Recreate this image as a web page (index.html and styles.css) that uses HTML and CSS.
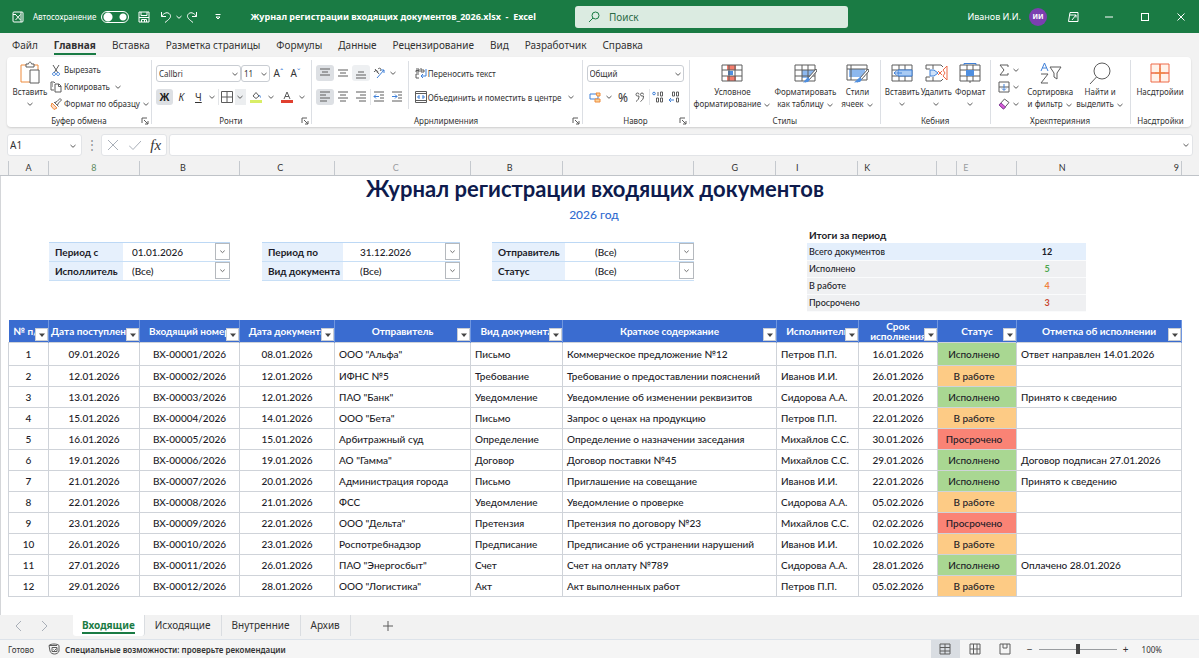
FILE: index.html
```html
<!DOCTYPE html>
<html lang="ru">
<head>
  <meta charset="UTF-8" />
  <meta name="viewport" content="width=device-width, initial-scale=1.0" />
  <title>Журнал регистрации входящих документов_2026.xlsx - Excel</title>
  <link rel="stylesheet" href="styles.css">
</head>
<body>
  <svg class="sprite" aria-hidden="true">
    <symbol id="chev" viewBox="0 0 8 8"><path d="M1.5 3 4 5.3 6.5 3" /></symbol>
    <symbol id="tri" viewBox="0 0 8 8"><path d="M1 2.5h6L4 6z" fill="#444" stroke="none" /></symbol>
    <symbol id="launch" viewBox="0 0 8 8"><path d="M1 6V1h5M3 3l4 4M7 4v3H4" /></symbol>
    <symbol id="sheetgrid" viewBox="0 0 24 20"><path d="M2 2h20v16H2zM2 7h20M2 13h20M9 2v16M15 2v16" /></symbol>
  </svg>

  <header class="titlebar">
    <svg class="ico app" viewBox="0 0 12 12"><rect x="1" y="1" width="10" height="10" rx="1" /><path d="M1 3.5h3M3.5 3.5l5 5.5M8.5 3.5l-5 5.5M9 1v10" /></svg>
    <label class="autosave">Автосохранение <input type="checkbox" class="toggle"></label>
    <button class="icon-btn"><svg class="ico" viewBox="0 0 12 12"><path d="M1 1h10v10H1zM3 1v3.5h6V1M1 6.5h10M3.5 11V8.500h5V11M6.500 9v2" /></svg></button>
    <div class="history">
      <button><svg class="ico" viewBox="0 0 12 12"><path d="M1.500 1v4.500H6M1.500 5.500C4 1.500 8 .5 10 3.500S8 9 5 11.500" /></svg></button>
      <button><svg class="chev"><use href="#chev" /></svg></button>
      <button><svg class="ico" viewBox="0 0 12 12"><path d="M10.500 1v4.500H6M10.500 5.500C8 1.500 4 .5 2 3.500S4 9 7 11.500" /></svg></button>
    </div>
    <button class="customize"><svg class="chev" viewBox="0 0 8 8"><path d="M1.500 1.500h5M2 4h4L4 6z" /></svg></button>
    <span class="doc-name">Журнал регистрации входящих документов_2026.xlsx&nbsp; - &nbsp;Excel</span>
    <label class="search">
      <svg class="ico" viewBox="0 0 12 12"><circle cx="7.500" cy="4.500" r="3.500" /><path d="M5 7 1 11" /></svg>
      <input type="text" placeholder="Поиск" aria-label="Поиск">
    </label>
    <div class="account">
      <span>Иванов И.И.</span>
      <span class="avatar">ИИ</span>
    </div>
    <div class="window-btns">
      <button><svg class="ico" viewBox="0 0 12 12"><path d="M3 1.500h8v9H1.500L3 1.500M2.500 4h4M5 9l4-5M6.500 4H9v2.500" /></svg></button>
      <button><svg class="ico" viewBox="0 0 12 12"><path d="M2 6h8" /></svg></button>
      <button><svg class="ico" viewBox="0 0 12 12"><rect x="2.500" y="2.500" width="7" height="7" /></svg></button>
      <button><svg class="ico" viewBox="0 0 12 12"><path d="M2.500 2.500l7 7M9.500 2.500l-7 7" /></svg></button>
    </div>
  </header>

  <nav class="tabs">
    <a href="#">Файл</a>
    <a href="#" class="active">Главная</a>
    <a href="#">Вставка</a>
    <a href="#">Разметка страницы</a>
    <a href="#">Формулы</a>
    <a href="#">Данные</a>
    <a href="#">Рецензирование</a>
    <a href="#">Вид</a>
    <a href="#">Разработчик</a>
    <a href="#">Справка</a>
  </nav>

  <section class="ribbon">
    <div class="group clipboard">
      <div class="group-body">
        <button class="big paste">
          <svg viewBox="0 0 24 24"><path class="orange" d="M8 4H3v17h10M16 4h4v5" /><path d="M8 6V3h2.500c0-2.500 3-2.500 3 0H16v3zM12 9h9v13h-9z" fill="#fff" /></svg>
          <span>Вставить</span><svg class="chev"><use href="#chev" /></svg>
        </button>
        <div class="stack">
          <button><svg class="ico" viewBox="0 0 12 12"><path d="M3 1l5 8M9 1 4 9" /><path class="blue" d="M4 8.500a1.500 1.500 0 1 0 .1 0M8 8.500a1.500 1.500 0 1 0 .1 0" /></svg>Вырезать</button>
          <button><svg class="ico" viewBox="0 0 12 12"><path d="M4 9H1V1h3l1 1M5 3h4l2 2v6H5zM8.500 3v2.500H11M2 3h1M2 5h1" /></svg>Копировать <svg class="chev gap"><use href="#chev" /></svg></button>
          <button><svg class="ico" viewBox="0 0 12 12"><path class="orange" d="M2 5l5 5-3 1.500L1 8z" fill="#fbd9c4" /><path d="M4 4l4.500 4.500M5 4.500l2-1 3-3 1.500 1.500-3 3-1 2" /></svg>Формат по образцу<svg class="chev"><use href="#chev" /></svg></button>
        </div>
      </div>
      <div class="group-name">Буфер обмена<button class="launcher"><svg class="chev"><use href="#launch" /></svg></button></div>
    </div>

    <div class="group font">
      <div class="group-body rows">
        <div class="row">
          <div class="pick family"><select aria-label="Шрифт"><option>Callbri</option></select><svg class="chev"><use href="#chev" /></svg></div>
          <div class="pick size"><select aria-label="Размер"><option>11</option></select><svg class="chev"><use href="#chev" /></svg></div>
          <button class="tool grow">A<sup>ˆ</sup></button>
          <button class="tool grow">A<sup>ˇ</sup></button>
        </div>
        <div class="row">
          <button class="tool on"><b>Ж</b></button>
          <button class="tool"><i>К</i></button>
          <button class="tool"><u>Ч</u></button>
          <button class="more"><svg class="chev"><use href="#chev" /></svg></button>
          <button class="tool split"><svg class="ico" viewBox="0 0 12 12"><path d="M.5.5h11v11H.5zM6 .5v11M.5 6h11" /></svg></button>
          <button class="more lit"><svg class="chev"><use href="#chev" /></svg></button>
          <button class="tool wide"><svg class="ico" viewBox="0 0 12 12"><path d="M3 5l3-3.500L9 5 6 7.500z" /><path class="blue" d="M9.500 4l1 2.500" /><path d="M0 9h12v3H0z" fill="#d9ee66" stroke="none" /></svg></button>
          <button class="more"><svg class="chev"><use href="#chev" /></svg></button>
          <button class="tool wide"><svg class="ico" viewBox="0 0 12 12"><path d="M3 8l3-7 3 7M4 5.500h4" /><path d="M0 9h12v3H0z" fill="#e0402f" stroke="none" /></svg></button>
          <button class="more"><svg class="chev"><use href="#chev" /></svg></button>
        </div>
      </div>
      <div class="group-name">Ронти<button class="launcher"><svg class="chev"><use href="#launch" /></svg></button></div>
    </div>

    <div class="group align">
      <div class="group-body">
        <div class="rows align-left">
          <div class="row">
            <button class="tool on"><svg class="ico" viewBox="0 0 12 12"><path d="M1 2h10M3 5h6M1 8h10" /></svg></button>
            <button class="tool"><svg class="ico" viewBox="0 0 12 12"><path d="M1 3h10M3 6h6M1 9h10" /></svg></button>
            <button class="tool on light"><svg class="ico" viewBox="0 0 12 12"><path d="M3 5h6M1 8h10M1 11h10" /></svg></button>
            <button class="tool"><svg class="ico" viewBox="0 0 12 12"><path d="M2 2l4 5M1 5c2-3 5-1 3 1M5 2c2-2 4 0 2 2" /><path class="blue" d="M4 11l7-8M11 6V3H8" /></svg></button>
            <button class="more"><svg class="chev"><use href="#chev" /></svg></button>
          </div>
          <div class="row">
            <button class="tool on"><svg class="ico" viewBox="0 0 12 12"><path d="M1 1h10M1 4h6M1 7h10M1 10h7" /></svg></button>
            <button class="tool"><svg class="ico" viewBox="0 0 12 12"><path d="M1 1h10M3 4h6M1 7h10M3 10h6" /></svg></button>
            <button class="tool"><svg class="ico" viewBox="0 0 12 12"><path d="M1 1h10M5 4h6M1 7h10M4 10h7" /></svg></button>
            <button class="tool split"><svg class="ico" viewBox="0 0 12 12"><path d="M1 1h10M7 4h4M7 7h4M1 10h10" /><path class="blue" d="M6 5.500H1M3 3.500l-2 2 2 2" /></svg></button>
            <button class="tool"><svg class="ico" viewBox="0 0 12 12"><path d="M1 1h10M7 4h4M7 7h4M1 10h10" /><path class="blue" d="M1 5.500h5M4 3.500l2 2-2 2" /></svg></button>
          </div>
        </div>
        <div class="rows align-right">
          <div class="row"><button class="text-tool"><svg class="ico" viewBox="0 0 12 12"><path d="M1 2h3v3H1v-1.500h3M6 1v4h3V3H6M1 7h3M1 7v4h3" /><path class="blue" d="M11 2v7H6M8 7 6 9l2 2" /></svg>Переносить текст</button></div>
          <div class="row"><button class="text-tool"><svg class="ico" viewBox="0 0 12 12"><path d="M.5.5h11v11H.5zM.5 2.500h11M.5 9.500h11" /><path class="blue" d="M2 6h2.500M10 6H7.500M4 4v4M8 4v4" /></svg>Объединить и поместить в центре <svg class="chev end"><use href="#chev" /></svg></button></div>
        </div>
      </div>
      <div class="group-name">Аррнлирменния<button class="launcher"><svg class="chev"><use href="#launch" /></svg></button></div>
    </div>

    <div class="group number">
      <div class="group-body rows">
        <div class="row">
          <div class="pick format"><select aria-label="Числовой формат"><option>Общий</option></select><svg class="chev"><use href="#chev" /></svg></div>
        </div>
        <div class="row">
          <button class="tool"><svg class="ico" viewBox="0 0 12 12"><path d="M1 3h8v5H1z" class="blue" /><path class="orange" d="M7 2h4v3H8zM6 8h5v3H6z" fill="#fbd39a" /></svg></button>
          <button class="more"><svg class="chev"><use href="#chev" /></svg></button>
          <button class="tool sign">%</button>
          <button class="tool"><svg class="ico" viewBox="0 0 12 12"><path d="M5 3.500a1.500 1.500 0 1 0-1.500 1.500H5c0 3-1 4-3 5.500M9.500 3.500A1.500 1.500 0 1 0 8 5h1.500c0 3-1 4-3 5.500" /></svg></button>
          <button class="tool split"><svg class="ico" viewBox="0 0 12 12"><circle class="blue" cx="2" cy="2.500" r="1.300" /><path d="M6 1v4M8.500 1h2v4h-2zM4.500 7h2v4h-2zM8.500 7h2v4h-2z" /></svg></button>
          <button class="tool"><svg class="ico" viewBox="0 0 12 12"><path d="M4.500 1h2v4h-2zM8.500 1h2v4h-2zM8.500 7h2v4h-2z" /><path class="blue" d="M6 9H1M3 7 1 9l2 2" /></svg></button>
        </div>
      </div>
      <div class="group-name">Навор<button class="launcher"><svg class="chev"><use href="#launch" /></svg></button></div>
    </div>

    <div class="group styles">
      <div class="group-body">
        <button class="big w76">
          <svg viewBox="0 0 24 20"><path d="M7 2h9v5H7zM7 13h9v5H7z" fill="#f47c6c" stroke="none" /><path d="M8 8h5v4H8z" fill="#4f8fe0" stroke="none" /><use href="#sheetgrid" width="24" height="20" /></svg>
          <span>Условное</span><span>форматирование <svg class="chev"><use href="#chev" /></svg></span>
        </button>
        <button class="big w70">
          <svg viewBox="0 0 24 20"><path d="M9 7h13l-6 8H9z" fill="#8db8ee" stroke="none" /><use href="#sheetgrid" width="24" height="20" /><path d="M23 6l-8 9-3 4 4-2 8-9z" fill="#fff" /><path d="M15 14l-5 5.500 5-.5 2-2.500z" fill="#4f8fe0" stroke="none" /></svg>
          <span>Форматировать</span><span>как таблицу <svg class="chev"><use href="#chev" /></svg></span>
        </button>
        <button class="big w34">
          <svg viewBox="0 0 24 20"><path d="M4 6h16v8H4z" fill="#8db8ee" stroke="none" /><path d="M2 2h20v15H2zM2 6h20M6 2v15" /><path d="M23 6l-8 9-3 4 4-2 8-9z" fill="#fff" /><path d="M15 14l-6 5.500 6-.5 2-2.500z" fill="#4f8fe0" stroke="none" /></svg>
          <span>Стили</span><span>ячеек <svg class="chev"><use href="#chev" /></svg></span>
        </button>
      </div>
      <div class="group-name">Стилы</div>
    </div>

    <div class="group cells">
      <div class="group-body">
        <button class="big w34">
          <svg viewBox="0 0 24 20"><use href="#sheetgrid" width="24" height="20" /><path d="M8 7h14v6H8z" fill="#a9cbf4" class="blue" /><path class="blue" d="M12 10H4M7 7.500 4 10l3 2.500" /></svg>
          <span>Вставить</span><svg class="chev"><use href="#chev" /></svg>
        </button>
        <button class="big w34">
          <svg viewBox="0 0 24 20"><path d="M2 6V2h15l2 2M2 14v4h15l2-2M2 6h4M2 14h4M9 2v4M9 14v4" /><path class="blue" d="M6 7h4l4 3-4 3H6z" fill="#cfe2fa" /><path class="red" d="M23 3v14l-4-4 2-3-2-3zM14 8l4 4M18 8l-4 4" /></svg>
          <span>Удалить</span><svg class="chev"><use href="#chev" /></svg>
        </button>
        <button class="big w34">
          <svg viewBox="0 0 24 20"><use href="#sheetgrid" width="24" height="20" /><path d="M8 7h8v6H8z" fill="#4f8fe0" stroke="none" /><path class="blue" d="M6 2V.5h12V2" /><path d="M12 18v2" /></svg>
          <span>Формат</span><svg class="chev"><use href="#chev" /></svg>
        </button>
      </div>
      <div class="group-name">Кебния</div>
    </div>

    <div class="group editing">
      <div class="group-body">
        <div class="stack">
          <button><svg class="ico" viewBox="0 0 12 12"><path d="M10 3V1H2l4 5-4 5h8V9" /></svg><svg class="chev"><use href="#chev" /></svg></button>
          <button><svg class="ico" viewBox="0 0 12 12"><path d="M1 1h10v10H1zM1 6h10" /><path class="blue" d="M6 3v6M4 7.500l2 2 2-2" /></svg><svg class="chev"><use href="#chev" /></svg></button>
          <button><svg class="ico" viewBox="0 0 12 12"><path d="M1 7l5.500-6L11 4.500 5.500 11z" /><path d="M1 7l2-2 4.500 4L5.500 11z" fill="#d65bd6" stroke="#8a3f9e" /></svg><svg class="chev"><use href="#chev" /></svg></button>
        </div>
        <button class="big w50">
          <svg viewBox="0 0 24 24"><path class="blue" d="M3 10 6.500 2 10 10M4.500 7h4" /><path d="M3 13h7l-7 9h7M12 6h11l-4 6v6l-3-2v-4z" /></svg>
          <span>Сортировка</span><span>и фильтр <svg class="chev"><use href="#chev" /></svg></span>
        </button>
        <button class="big w50">
          <svg viewBox="0 0 24 24"><circle cx="14" cy="10" r="8" /><path d="M8.500 16 2 23" /></svg>
          <span>Найти и</span><span>выделить <svg class="chev"><use href="#chev" /></svg></span>
        </button>
      </div>
      <div class="group-name">Хрекптерияния</div>
    </div>

    <div class="group addins">
      <div class="group-body">
        <button class="big w50">
          <svg viewBox="0 0 24 24"><path class="red" d="M3 3h9v9H3zM12 3h9v9h-9zM3 12h9v9H3zM12 12h9v9h-9z" fill="#fff3ea" /><path class="orange" d="M12 7v10M7 12h10" /></svg>
          <span>Насдтройии</span>
        </button>
      </div>
      <div class="group-name">Насдтройки</div>
    </div>
  </section>

  <section class="formula-bar">
    <div class="pick name-box"><select aria-label="Имя ячейки"><option>A1</option></select><svg class="chev"><use href="#chev" /></svg></div>
    <span class="dots">⋮</span>
    <div class="fx-box">
      <button><svg class="ico pale" viewBox="0 0 12 12"><path d="M1 1l10 10M11 1 1 11" /></svg></button>
      <button><svg class="ico pale" viewBox="0 0 12 12"><path d="M0 6.500 4 10.500 12 2" /></svg></button>
      <button class="fx">fx</button>
    </div>
    <div class="formula">
      <input type="text" aria-label="Строка формул">
      <svg class="chev"><use href="#chev" /></svg>
    </div>
  </section>

  <div class="col-heads">
    <span></span><span>A</span><span class="green">8</span><span class="near">B</span><span class="near">C</span><span class="near faint">C</span><span class="near">B</span><span></span><span>G</span><span class="far">I</span><span class="start">K</span><span></span><span class="start faint">E</span><span class="plain">N</span><span class="end">9</span>
  </div>

  <main class="sheet">
    <h1>Журнал регистрации входящих документов</h1>
    <p class="year">2026 год</p>

    <div class="panel">
      <div class="filters">
        <label for="f-from">Период с</label>
        <div class="drop"><select id="f-from"><option>01.01.2026</option></select><svg class="chev"><use href="#chev" /></svg></div>
        <label for="f-person">Исполлитель</label>
        <div class="drop"><select id="f-person"><option>(Все)</option></select><svg class="chev"><use href="#chev" /></svg></div>
      </div>
      <div class="filters second">
        <label for="f-to">Период по</label>
        <div class="drop"><select id="f-to"><option>31.12.2026</option></select><svg class="chev"><use href="#chev" /></svg></div>
        <label for="f-kind">Вид документа</label>
        <div class="drop"><select id="f-kind"><option>(Все)</option></select><svg class="chev"><use href="#chev" /></svg></div>
      </div>
      <div class="filters third">
        <label for="f-sender">Отправитель</label>
        <div class="drop"><select id="f-sender"><option>(Все)</option></select><svg class="chev"><use href="#chev" /></svg></div>
        <label for="f-status">Статус</label>
        <div class="drop"><select id="f-status"><option>(Все)</option></select><svg class="chev"><use href="#chev" /></svg></div>
      </div>
      <table class="totals">
        <caption>Итоги за период</caption>
        <tbody>
          <tr class="all"><td>Всего документов</td><td class="num">12</td></tr>
          <tr><td>Исполнено</td><td class="num good">5</td></tr>
          <tr><td>В работе</td><td class="num wait">4</td></tr>
          <tr><td>Просрочено</td><td class="num bad">3</td></tr>
        </tbody>
      </table>
    </div>

    <table class="journal">
      <colgroup>
        <col class="c-num"><col class="c-in"><col class="c-code"><col class="c-date"><col class="c-sender"><col class="c-kind">
        <col class="c-text"><col class="c-person"><col class="c-due"><col class="c-status"><col class="c-note">
      </colgroup>
      <thead><tr id="journalHead"></tr></thead>
      <tbody id="journalRows"></tbody>
    </table>
  </main>

  <footer>
    <div class="sheet-tabs">
      <button class="arrow"><svg class="ico pale" viewBox="0 0 12 12"><path d="M8 1 3 6l5 5" /></svg></button>
      <button class="arrow"><svg class="ico pale" viewBox="0 0 12 12"><path d="M4 1l5 5-5 5" /></svg></button>
      <a href="#" class="tab active"><span>Входящие</span></a>
      <a href="#" class="tab">Исходящие</a>
      <a href="#" class="tab">Внутренние</a>
      <a href="#" class="tab">Архив</a>
      <button class="add"><svg class="ico" viewBox="0 0 12 12"><path d="M6 1v10M1 6h10" /></svg></button>
    </div>
    <div class="status-bar">
      <span>Готово</span>
      <svg class="ico" viewBox="0 0 12 12"><path d="M1 2.500C3 .5 9 .5 11 2.500V8c-1 4-8 4-9 0zM1 2.500h8M4 4.500h5v4H4zM5.500 6.500l1 1 2-2" /></svg>
      <b>Специальные возможности: проверьте рекомендации</b>
      <div class="views">
        <button class="on"><svg class="ico" viewBox="0 0 12 12"><path d="M1 1h10v10H1zM6 1v10M1 4.500h10M1 8h10" /></svg></button>
        <button><svg class="ico" viewBox="0 0 12 12"><path d="M1 1h10v10H1zM4.500 1v10M8 1v10M1 6h10" /></svg></button>
        <button><svg class="ico" viewBox="0 0 12 12"><path d="M1 1h10v10H1zM4 1v4M8 1v4H4" /></svg></button>
      </div>
      <button class="zoom-step">−</button>
      <input type="range" min="0" max="200" value="100" aria-label="Масштаб">
      <button class="zoom-step">+</button>
      <span class="percent">100%</span>
    </div>
  </footer>

  <script>
    const heads = ['№ п/п', 'Дата поступления', 'Входящий номер', 'Дата документа', 'Отправитель', 'Вид документа',
      'Краткое содержание', 'Исполнитель', 'Срок<br>исполнения', 'Статус', 'Отметка об исполнении'];

    const rows = [
      ['09.01.2026', '08.01.2026', 'ООО "Альфа"', 'Письмо', 'Коммерческое предложение №12', 'Петров П.П.', '16.01.2026', 'done', 'Ответ направлен 14.01.2026'],
      ['12.01.2026', '12.01.2026', 'ИФНС №5', 'Требование', 'Требование о предоставлении пояснений', 'Иванов И.И.', '26.01.2026', 'work', ''],
      ['13.01.2026', '12.01.2026', 'ПАО "Банк"', 'Уведомление', 'Уведомление об изменении реквизитов', 'Сидорова А.А.', '20.01.2026', 'done', 'Принято к сведению'],
      ['15.01.2026', '14.01.2026', 'ООО "Бета"', 'Письмо', 'Запрос о ценах на продукцию', 'Петров П.П.', '22.01.2026', 'work', ''],
      ['16.01.2026', '15.01.2026', 'Арбитражный суд', 'Определение', 'Определение о назначении заседания', 'Михайлов С.С.', '30.01.2026', 'late', ''],
      ['19.01.2026', '19.01.2026', 'АО "Гамма"', 'Договор', 'Договор поставки №45', 'Михайлов С.С.', '29.01.2026', 'done', 'Договор подписан 27.01.2026'],
      ['21.01.2026', '20.01.2026', 'Администрация города', 'Письмо', 'Приглашение на совещание', 'Иванов И.И.', '22.01.2026', 'done', 'Принято к сведению'],
      ['22.01.2026', '21.01.2026', 'ФСС', 'Уведомление', 'Уведомление о проверке', 'Сидорова А.А.', '05.02.2026', 'work', ''],
      ['23.01.2026', '22.01.2026', 'ООО "Дельта"', 'Претензия', 'Претензия по договору №23', 'Михайлов С.С.', '02.02.2026', 'late', ''],
      ['26.01.2026', '23.01.2026', 'Роспотребнадзор', 'Предписание', 'Предписание об устранении нарушений', 'Иванов И.И.', '10.02.2026', 'work', ''],
      ['27.01.2026', '26.01.2026', 'ПАО "Энергосбыт"', 'Счет', 'Счет на оплату №789', 'Сидорова А.А.', '28.01.2026', 'done', 'Оплачено 28.01.2026'],
      ['29.01.2026', '28.01.2026', 'ООО "Логистика"', 'Акт', 'Акт выполненных работ', 'Петров П.П.', '05.02.2026', 'work', '']
    ];
    const statusText = { done: 'Исполнено', work: 'В работе', late: 'Просрочено' };

    document.getElementById('journalHead').innerHTML = heads.map(h =>
      `<th><div class="head">${h}</div><button class="filter-btn" aria-label="Фильтр"><svg class="chev"><use href="#tri" /></svg></button></th>`
    ).join('');

    document.getElementById('journalRows').innerHTML = rows.map((r, i) => {
      const code = 'ВХ-' + String(i + 1).padStart(5, '0') + '/2026';
      return `<tr>
        <td class="mid">${i + 1}</td>
        <td class="mid">${r[0]}</td>
        <td class="mid">${code}</td>
        <td class="mid">${r[1]}</td>
        <td>${r[2]}</td>
        <td>${r[3]}</td>
        <td>${r[4]}</td>
        <td>${r[5]}</td>
        <td class="mid">${r[6]}</td>
        <td class="status ${r[7]}">${statusText[r[7]]}</td>
        <td>${r[8]}</td>
      </tr>`;
    }).join('');
  </script>
</body>
</html>
```
FILE: styles.css
```css
* {
  box-sizing: border-box;
}
body {
  margin: 0;
  min-height: 100vh;
  display: flex;
  flex-direction: column;
  font-family: 'Noto Sans', 'Open Sans', sans-serif;
  font-size: 8px;
  color: #333;
  background: #f2f2f2;
}
button, input, select {
  font: inherit;
  color: inherit;
}
button {
  padding: 0;
  border: none;
  background: none;
  cursor: pointer;
  display: flex;
  align-items: center;
  justify-content: center;
  white-space: nowrap;
}
a {
  color: inherit;
  text-decoration: none;
}
svg {
  fill: none;
  stroke: #5c5c5c;
  stroke-width: 1;
  flex: none;
}
.sprite {
  position: absolute;
  width: 0;
  height: 0;
}
.ico {
  width: 12px;
  height: 12px;
}
.chev {
  width: 8px;
  height: 8px;
}
.pale {
  stroke: #a9afb8;
}
.blue {
  stroke: #3f80d8;
}
.orange {
  stroke: #ee8b3c;
}
.red {
  stroke: #ee6a48;
}

/* title bar */
.titlebar {
  height: 33px;
  padding: 0 12px;
  background: #1a7b44;
  color: #fff;
  display: flex;
  align-items: center;
}
.titlebar svg {
  stroke: #fff;
}
.autosave {
  margin-left: 9px;
  display: flex;
  align-items: center;
  gap: 5px;
}
.toggle {
  appearance: none;
  margin: 0;
  width: 28px;
  height: 12px;
  border: 1px solid #fff;
  border-radius: 6px;
  background: radial-gradient(circle at 6px 5px, #fff 4px, transparent 5px), radial-gradient(circle at 21px 5px, #fff 3px, transparent 4px);
}
.icon-btn {
  margin-left: 9px;
}
.history {
  margin-left: 10px;
  display: flex;
  gap: 3px;
}
.customize {
  margin-left: 16px;
}
.doc-name {
  margin-left: 28px;
  font-size: 9px;
  font-weight: 700;
  white-space: nowrap;
}
.search {
  margin-left: 39px;
  width: 273px;
  height: 22px;
  padding: 0 13px;
  border-radius: 3px;
  background: #dbebe1;
  display: flex;
  align-items: center;
  gap: 9px;
}
.titlebar .search svg {
  stroke: #1a7b44;
}
.search input {
  flex: 1;
  min-width: 0;
  padding: 0;
  border: none;
  background: none;
  outline: none;
  font-size: 10px;
}
.search input::placeholder {
  color: #2c6b48;
  opacity: 1;
}
.account {
  margin-left: auto;
  font-size: 9px;
  display: flex;
  align-items: center;
  gap: 8px;
}
.avatar {
  width: 18px;
  height: 18px;
  line-height: 18px;
  border-radius: 50%;
  background: #7b3fb0;
  text-align: center;
  font-size: 7px;
  font-weight: 700;
}
.window-btns {
  margin-left: 20px;
  display: flex;
  gap: 24px;
}

/* ribbon tabs */
.tabs {
  height: 24px;
  padding: 3px 12px 0;
  display: flex;
  gap: 16px;
  font-size: 10px;
  line-height: 18px;
  white-space: nowrap;
}
.tabs .active {
  font-weight: 700;
  border-bottom: 2px solid #1a7b44;
  height: 19px;
}

/* ribbon */
.ribbon {
  margin: 0 8px 3px 7px;
  background: #fff;
  border-radius: 4px;
  box-shadow: 0 1px 2px rgba(0, 0, 0, 0.15);
  display: grid;
  grid-template-columns: 144fr 160fr 271fr 108fr 191fr 110fr 140fr 61fr;
}
.group {
  padding-top: 4px;
  position: relative;
}
.group + .group::before {
  content: '';
  position: absolute;
  left: 0;
  top: 3px;
  bottom: 3px;
  border-left: 1px solid #dcdfe4;
}
.group-body {
  height: 54px;
  display: flex;
  padding-left: 5px;
}
.group-name {
  height: 12px;
  line-height: 12px;
  text-align: center;
  position: relative;
}
.launcher {
  position: absolute;
  right: 2px;
  top: 2px;
}
.rows, .group-body.rows {
  display: flex;
  flex-direction: column;
}
.row {
  height: 24px;
  display: flex;
  align-items: center;
}
.stack button {
  height: 17px;
  gap: 2px;
}
.chev.gap {
  margin-left: 2px;
}
.big {
  flex-direction: column;
  justify-content: flex-start;
  line-height: 12px;
}
.big > svg:first-child {
  width: 24px;
  height: 24px;
  margin-bottom: 1px;
}
.big > .chev {
  margin-top: 2px;
}
.big span .chev {
  vertical-align: middle;
}
.big.w76 {
  width: 76px;
}
.big.w70 {
  width: 70px;
}
.big.w50 {
  width: 50px;
}
.big.w34 {
  width: 34px;
}
.paste {
  width: 36px;
  margin-right: 2px;
}
.pick {
  height: 17px;
  border: 1px solid #c9cdd3;
  border-radius: 3px;
  background: #fff;
  position: relative;
}
.pick select {
  width: 100%;
  height: 100%;
  padding: 0 0 0 2px;
  border: none;
  background: none;
  appearance: none;
}
.pick .chev {
  position: absolute;
  right: 1px;
  top: 4px;
  pointer-events: none;
}
.family {
  width: 85px;
}
.size {
  width: 29px;
}
.format {
  width: 97px;
}
.tool {
  width: 17px;
  height: 16px;
  font-size: 10px;
}
.tool.on {
  background: #dde0e4;
  border-radius: 3px;
}
.tool.light {
  background: #eef0f2;
}
.tool.on b {
  color: #222;
}
.tool.wide {
  width: 20px;
}
.tool.grow sup {
  font-size: 8px;
  line-height: 8px;
  color: #3f80d8;
}
.tool.sign {
  font-size: 12px;
}
.more {
  width: 11px;
  height: 16px;
}
.more.lit {
  background: #eceef0;
}
.split {
  border-left: 1px solid #e3e5e8;
}
.align-left {
  width: 92px;
}
.align-left .tool {
  width: 18px;
}
.align-right {
  height: 48px;
  border-left: 1px solid #dcdfe4;
  padding-left: 6px;
}
.align-right .chev.end {
  margin-left: 4px;
}
.text-tool {
  gap: 1px;
}
.editing .stack {
  width: 30px;
  padding-left: 3px;
}

/* formula bar */
.formula-bar {
  height: 31px;
  padding: 4px 6px 5px 7px;
  display: flex;
}
.formula-bar .pick {
  width: 75px;
  height: 22px;
  border-color: #e2e4e7;
  font-size: 10px;
}
.name-box .chev {
  top: 7px;
  right: 4px;
}
.dots {
  width: 19px;
  text-align: center;
  font-size: 12px;
  line-height: 22px;
  color: #8c8f94;
}
.fx-box {
  width: 66px;
  background: #fff;
  border: 1px solid #e2e4e7;
  border-radius: 3px;
  display: flex;
  align-items: center;
  justify-content: space-around;
}
.fx {
  font-family: 'Liberation Serif', serif;
  font-style: italic;
  font-size: 15px;
}
.formula {
  flex: 1;
  margin-left: 2px;
  padding-right: 2px;
  background: #fff;
  border: 1px solid #e2e4e7;
  border-radius: 3px;
  display: flex;
  align-items: center;
}
.formula input {
  flex: 1;
  border: none;
  outline: none;
  background: none;
}

/* column letters */
.col-heads {
  height: 15px;
  border-bottom: 1px solid #bfc3c8;
  display: grid;
  grid-template-columns: 9fr 40fr 91fr 100fr 95fr 136fr 92fr 132fr 82fr 82fr 79fr 20fr 60fr 90fr 75fr 17fr;
  line-height: 14px;
  text-align: center;
  font-family: Lato, sans-serif;
  font-size: 9px;
}
.col-heads span {
  border-right: 1px solid #c5c9ce;
}
.col-heads .plain {
  border-right: none;
}
.col-heads .green {
  color: #5d8a5f;
}
.col-heads .faint {
  color: #9a9da1;
}
.col-heads .near {
  padding-right: 13px;
}
.col-heads .far {
  padding-right: 39px;
}
.col-heads .start {
  text-align: left;
  padding-left: 6px;
}
.col-heads .end {
  text-align: right;
  padding-right: 2px;
}

/* worksheet */
.sheet {
  flex: 1;
  background: #fff;
  border-left: 1px solid #d4d6d9;
  color: #1c1c28;
  font-family: Lato, sans-serif;
  font-weight: 500;
}
.sheet h1 {
  margin: 0;
  padding-right: 10px;
  text-align: center;
  font-size: 22px;
  line-height: 26px;
  color: #0e1b4d;
}
.year {
  margin: 0;
  padding-right: 12px;
  text-align: center;
  font-size: 12px;
  line-height: 26px;
  color: #2f6bd0;
}
.panel {
  padding: 0 113px 0 48px;
  display: flex;
  align-items: flex-start;
}
.filters {
  flex: 181;
  margin: 14px 32px 0 0;
  display: grid;
  grid-template-columns: 74px 1fr;
  border-top: 1px solid #bcd8f5;
  font-size: 10px;
}
.filters.second {
  flex: 198;
  grid-template-columns: 81px 1fr;
}
.filters.third {
  flex: 202;
  grid-template-columns: 73px 1fr;
  margin-right: 113px;
}
.filters label {
  padding-left: 6px;
  line-height: 18px;
  font-weight: 700;
  background: #e6f0fc;
  white-space: nowrap;
}
.filters label, .drop {
  height: 19px;
  border-bottom: 1px solid #c8dff6;
}
.drop {
  display: flex;
  position: relative;
}
.drop select {
  width: 100%;
  padding: 0 0 0 9px;
  border: none;
  background: none;
  appearance: none;
}
.second .drop select {
  padding-left: 17px;
}
.third .drop select {
  padding-left: 30px;
}
.drop .chev {
  position: absolute;
  right: 0;
  top: 0;
  width: 15px;
  height: 17px;
  padding: 3px;
  border: 1px solid #b5b9be;
  background: #fff;
  pointer-events: none;
}
.totals {
  flex: 279;
  display: grid;
  font-size: 9px;
}
.totals caption {
  padding-left: 2px;
  text-align: left;
  font-size: 10px;
  font-weight: 700;
  line-height: 15px;
}
.totals tr {
  display: grid;
  grid-template-columns: 1fr 78px;
  height: 17px;
  line-height: 16px;
  background: #eff0f2;
  border-bottom: 1px solid #fafbfc;
}
.totals .all {
  height: 18px;
  line-height: 18px;
  background: #e4effc;
}
.totals td {
  padding: 0 2px;
}
.totals .num {
  text-align: center;
  font-weight: 700;
}
.totals .good {
  color: #4ca64c;
}
.totals .wait {
  color: #f08040;
}
.totals .bad {
  color: #c8452e;
}

.journal {
  width: calc(100% - 24px);
  margin: 8px 17px 18px 7px;
  border-collapse: collapse;
  table-layout: fixed;
  font-size: 10px;
}
.c-num { width: 40px; }
.c-in { width: 91px; }
.c-code { width: 100px; }
.c-date { width: 95px; }
.c-sender { width: 136px; }
.c-kind { width: 92px; }
.c-text { width: 214px; }
.c-person { width: 82px; }
.c-due { width: 79px; }
.c-status { width: 79px; }
.c-note { width: 165px; }
.journal th {
  height: 22px;
  padding: 0;
  position: relative;
  background: #3a6cd0;
  border-right: 1px solid #6f96e0;
  color: #fff;
  font-weight: 700;
  line-height: 10px;
}
.head {
  height: 22px;
  display: flex;
  flex-direction: column;
  align-items: center;
  justify-content: center;
  overflow: hidden;
  white-space: nowrap;
}
.filter-btn {
  position: absolute;
  right: 0;
  bottom: 1px;
  width: 13px;
  height: 13px;
  background: #fff;
  border: 1px solid #c9cdd3;
}
.journal td {
  height: 21px;
  padding: 0 4px;
  border: 1px solid #cfd3d9;
  line-height: 14px;
  white-space: nowrap;
}
.journal tbody tr:first-child td {
  height: 23px;
}
.journal .mid {
  text-align: center;
}
.journal .status {
  text-align: center;
  padding-right: 10px;
}
.status.done {
  background: #a9d792;
}
.status.work {
  background: #fdcb85;
}
.status.late {
  background: #fa8375;
}

/* sheet tabs and status bar */
.sheet-tabs {
  height: 24px;
  padding-left: 13px;
  display: flex;
  align-items: flex-start;
  font-size: 10px;
  line-height: 21px;
}
.arrow {
  width: 12px;
  height: 22px;
  margin-right: 13px;
}
.tab {
  padding: 0 10px;
  border-right: 1px solid #dadde1;
}
.tab.active {
  margin-left: 10px;
  padding: 0 9px;
  background: #fff;
  border-radius: 0 0 3px 3px;
  color: #1a7b44;
  font-weight: 700;
}
.tab.active span {
  border-bottom: 2px solid #1a7b44;
}
.add {
  margin-left: 31px;
  height: 22px;
}
.status-bar {
  height: 19px;
  padding: 0 37px 0 8px;
  border-top: 1px solid #dde3ea;
  background: #f5f5f5;
  display: flex;
  align-items: center;
}
.status-bar > .ico {
  margin: 0 5px 0 14px;
}
.status-bar b {
  font-weight: 600;
}
.views {
  margin-left: auto;
  display: flex;
  height: 100%;
}
.views button {
  width: 29px;
  margin-right: 1px;
}
.views .on {
  background: #d9dde2;
}
.zoom-step {
  width: 18px;
  height: 16px;
  font-size: 10px;
  line-height: 16px;
}
.status-bar input {
  appearance: none;
  width: 78px;
  height: 10px;
  margin: 0;
  background: linear-gradient(#9a9da1, #9a9da1) center / 100% 1px no-repeat;
}
.status-bar input::-webkit-slider-thumb {
  appearance: none;
  width: 4px;
  height: 10px;
  background: #444;
}
.percent {
  margin-left: 7px;
}
```
